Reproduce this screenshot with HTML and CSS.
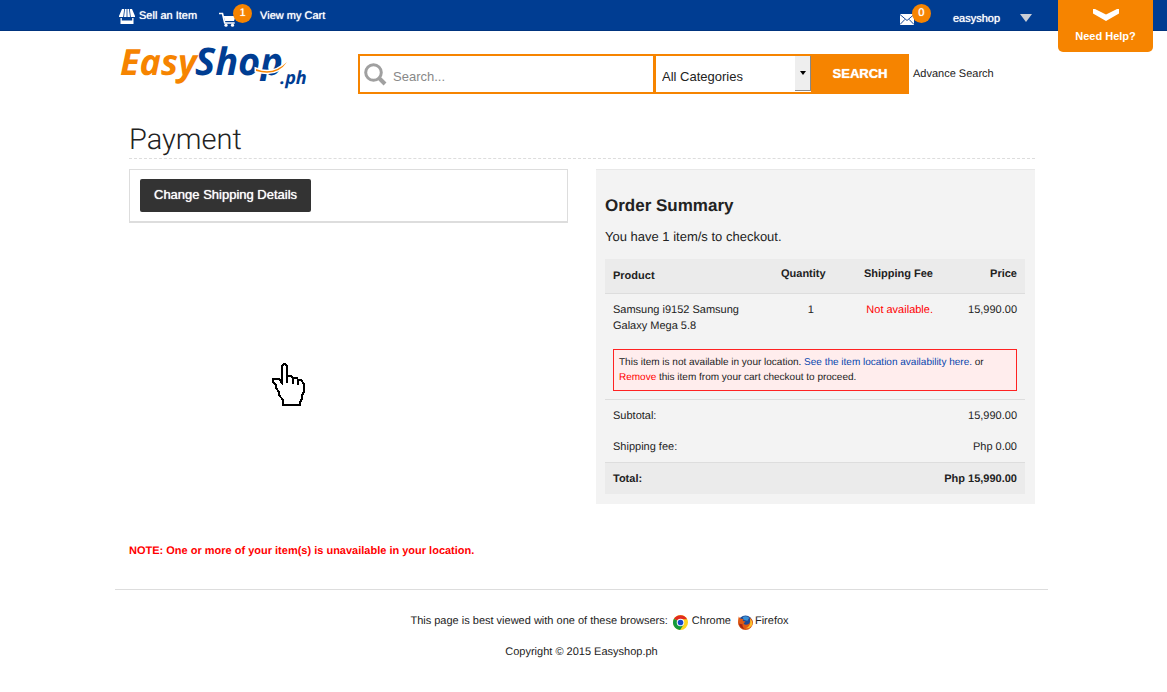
FILE: index.html
```html
<!DOCTYPE html>
<html lang="en">
<head>
<meta charset="utf-8">
<title>Payment | EasyShop.ph</title>
<link rel="stylesheet" href="styles.css">
</head>
<body>
<header>
  <nav class="topbar">
    <div class="topbar-group">
      <a class="toplink" href="#">
        <svg width="16" height="15" viewBox="0 0 16 15" fill="#fff"><path d="M3 0h2.200L4.200 8H0V7zM6 0h1.600v8H5zM8.400 0H10l1 8H8.400zM10.800 0H13l3 7v1h-4.200zM1.500 9h1.300v2.500h10.400V9h1.300v6h-13z"/></svg>
        Sell an Item</a>
      <a class="toplink cart" href="#">
        <svg width="17" height="15" viewBox="0 0 17 15"><path d="M0 1.500h3.500l2.200 9.500h10" fill="none" stroke="#fff" stroke-width="1.600"/><path d="M4.500 4h12l-1.500 5H6z" fill="#fff"/><circle cx="7" cy="13.200" r="1.600" fill="#fff"/><circle cx="13.500" cy="13.200" r="1.600" fill="#fff"/></svg>
        <span class="badge">1</span>
        <span>View my Cart</span></a>
    </div>
    <div class="topbar-group account">
      <a class="toplink mail" href="#" aria-label="Messages">
        <svg width="14" height="11" viewBox="0 0 14 11"><path fill="#fff" d="M0 0h14v11H0z"/><path d="M0 .5l7 6 7-6M0 10.500l5-5.200M14 10.500L9 5.300" fill="none" stroke="#1b4b98"/></svg>
        <span class="badge">0</span></a>
      <button class="user" type="button">easyshop
        <svg width="12" height="8" viewBox="0 0 12 8"><path fill="#c9ced6" d="M0 0h12L6 8z"/></svg></button>
    </div>
    <button class="help" type="button">
      <svg width="26" height="12" viewBox="0 0 26 12"><path fill="#fff" d="M0 0h2l11 5.500L24 0h2v4.500L13 12 0 4.500z"/></svg>
      Need Help?</button>
  </nav>
  <div class="masthead">
    <a class="logo" href="#" aria-label="EasyShop.ph">
      <svg width="190" height="63" viewBox="0 0 190 63">
        <text x="0" y="44" class="logo-easy">Easy</text>
        <text x="75" y="44" class="logo-shop">Shop</text>
        <path d="M130 50h24v12h-24z" fill="#fff"/>
        <path d="M136 38q17 7 31-7-10 15-31 9z" fill="#f68400" stroke="#fff" stroke-width="3" paint-order="stroke"/>
        <text x="160" y="53" class="logo-ph">.ph</text>
      </svg>
    </a>
    <form class="search">
      <label class="search-box">
        <svg width="23" height="23" viewBox="0 0 23 23" fill="none" stroke="#a0a0a0"><circle cx="9.500" cy="9.500" r="7.800" stroke-width="3"/><path d="M15 15l6 6" stroke-width="4"/></svg>
        <input type="text" placeholder="Search..." aria-label="Search">
      </label>
      <div class="category">
        <select aria-label="Category"><option>All Categories</option></select>
        <span class="category-arrow"><svg width="6" height="4" viewBox="0 0 6 4"><path d="M0 0h6L3 4z"/></svg></span>
      </div>
      <button class="search-button" type="submit">SEARCH</button>
      <a class="advanced" href="#">Advance Search</a>
    </form>
  </div>
</header>
<main>
  <h1>Payment</h1>
  <div class="columns">
    <section class="shipping"><button class="change" type="button">Change Shipping Details</button></section>
    <section class="summary">
      <h2>Order Summary</h2>
      <p class="count">You have 1 item/s to checkout.</p>
      <table>
        <colgroup><col class="c-product"><col class="c-qty"><col class="c-fee"><col class="c-price"></colgroup>
        <thead><tr><th class="product">Product</th><th>Quantity</th><th class="right">Shipping Fee</th><th class="right">Price</th></tr></thead>
        <tbody>
          <tr class="item"><td>Samsung i9152 Samsung Galaxy Mega 5.8</td><td class="center">1</td><td class="right red">Not available.</td><td class="right">15,990.00</td></tr>
          <tr class="notice"><td colspan="4"><div class="alert">This item is not available in your location. <a class="blue" href="#">See the item location availability here.</a> or <a class="red" href="#">Remove</a> this item from your cart checkout to proceed.</div></td></tr>
        </tbody>
        <tfoot>
          <tr class="subtotal"><td colspan="2">Subtotal:</td><td class="right" colspan="2">15,990.00</td></tr>
          <tr><td colspan="2">Shipping fee:</td><td class="right" colspan="2">Php 0.00</td></tr>
          <tr class="total"><td colspan="2">Total:</td><td class="right" colspan="2">Php 15,990.00</td></tr>
        </tfoot>
      </table>
    </section>
  </div>
  <p class="note">NOTE: One or more of your item(s) is unavailable in your location.</p>
</main>
<footer>
  <p class="browsers">This page is best viewed with one of these browsers:
    <a href="#"><svg width="15" height="15" viewBox="0 0 16 16"><circle cx="8" cy="8" r="8" fill="#ffd51d"/><path d="M8 8L1 4.100a8 8 0 0 1 14 .4H8z" fill="#e12b20"/><path d="M8 8L1 4.100A8 8 0 0 0 7.500 16l4-6z" fill="#149a3c"/><circle cx="8" cy="8" r="4" fill="#fff"/><circle cx="8" cy="8" r="3" fill="#1749c9"/></svg>
    <span>Chrome</span></a>
    <a class="firefox" href="#"><svg width="15" height="15" viewBox="0 0 16 16"><circle cx="8" cy="8" r="7.500" fill="#1f4a96"/><path d="M5 2q4-2 7 1l-2 3-4-1z" fill="#3a91d5"/><path d="M1 2l2 2 3 .5-1 2 3 .5-2 2q2 3 6 0 2-3 0-7 4 3 4 6a8 8 0 0 1-16 0q0-4 1-7z" fill="#e25a13"/><path d="M13 4q3 3 2 7-3 4-7 3 6-1 5-10z" fill="#ffc02b"/><path d="M1 9q1 5 6 6-3-3-2-5z" fill="#a92412"/></svg>
    <span>Firefox</span></a></p>
  <p class="copyright">Copyright © 2015 Easyshop.ph</p>
</footer>
<svg class="pointer" width="34" height="44" viewBox="0 0 34 44" shape-rendering="crispEdges"><path d="M10 20V3l2-2h1l2 2v10h4l2 2h4l1 2h3l3 4v8l-2 3v4l-2 3v3H11v-5l-4-5v-3l-3-4v-3l-3-3v-3h6l3 4zM15 13v7M21 15v6M26 17v5" fill="#fff" stroke="#000" stroke-width="2"/></svg>
</body>
</html>
```
FILE: styles.css
```css
* { box-sizing: border-box; }
body {
  margin: 0;
  position: relative;
  font: 11px/16px "Liberation Sans", Arial, sans-serif;
  text-rendering: geometricPrecision;
  color: #222;
  background: #fff;
}
a { color: inherit; text-decoration: none; }
button, input, select { font: inherit; border: 0; margin: 0; padding: 0; }
button { cursor: pointer; }
h1, h2, p { margin: 0; }
svg { flex: none; }

.topbar {
  display: flex;
  justify-content: space-between;
  position: relative;
  height: 31px;
  padding: 0 135px 0 119px;
  background: #003d92;
  border-bottom: 1px solid #00347f;
  color: #fff;
}
.topbar-group { display: flex; align-items: center; gap: 22px; padding-top: 2px; text-shadow: 0 0 1px #fff; }
.toplink { display: flex; align-items: center; gap: 4px; }
.cart, .mail { position: relative; }
.cart { gap: 24px; }
.cart svg, .mail svg { margin-top: 6px; }
.badge {
  position: absolute;
  left: 14px;
  top: -2px;
  width: 19px;
  border-radius: 10px;
  background: #f68400;
  line-height: 19px;
  text-align: center;
}
.mail .badge { left: 12px; top: -4px; }
.account { gap: 39px; }
.user { display: flex; align-items: center; gap: 20px; padding-top: 3px; background: none; color: #fff; text-shadow: inherit; }
.help {
  position: absolute;
  top: 0;
  right: 14px;
  display: flex;
  flex-direction: column;
  align-items: center;
  gap: 7px;
  width: 95px;
  padding: 9px 0 8px;
  border-radius: 0 0 5px 5px;
  background: #f68400;
  color: #fff;
  font-weight: bold;
}

.masthead { display: flex; padding: 0 178px 0 120px; }
.logo { width: 238px; }
.logo svg { display: block; }
.logo text { font-family: "Open Sans", "Noto Sans", sans-serif; font-style: italic; font-weight: 700; }
.logo-easy { font-size: 36px; fill: #f68400; }
.logo-shop { font-size: 38px; fill: #003d92; }
.logo .logo-ph { font-size: 18px; fill: #003d92; }
.search { display: flex; flex: 1; height: 40px; margin-top: 23px; font-size: 13px; }
.search-box {
  display: flex;
  align-items: center;
  gap: 6px;
  flex: 1;
  padding-left: 4px;
  border: 2px solid #f68400;
}
.search-box input { flex: 1; min-width: 0; height: 34px; padding-top: 4px; outline: 0; }
.search-box input::placeholder { color: #888; opacity: 1; }
.category { position: relative; width: 156px; border: solid #f68400; border-width: 2px 0 2px 1px; }
.category select { width: 100%; height: 36px; padding: 5px 20px 0 6px; appearance: none; background: #fff; color: #222; }
.category-arrow {
  position: absolute;
  top: 0;
  right: 0;
  display: flex;
  align-items: center;
  justify-content: center;
  width: 16px;
  height: 35px;
  border: solid #888;
  border-width: 0 1px 1px 0;
  background: #eee;
  pointer-events: none;
}
.search-button { width: 98px; background: #f68400; color: #fff; font-weight: bold; text-shadow: 0 0 1px #fff; }
.advanced { width: 80px; padding: 12px 0 0 4px; font-size: 11px; white-space: nowrap; }

main { padding: 0 132px 0 129px; }
h1 {
  padding: 28px 0 0;
  border-bottom: 1px dashed #ddd;
  font-family: Roboto, sans-serif;
  font-size: 29px;
  font-weight: 300;
  line-height: 36px;
}
.columns { display: grid; grid-template-columns: 1fr 1fr; gap: 28px; align-items: start; margin-top: 10px; }
.shipping { padding: 9px 10px; border: 1px solid #ddd; border-bottom-width: 2px; }
.change {
  display: block;
  padding: 0 14px 2px;
  border-radius: 2px;
  background: #333;
  color: #fff;
  font-size: 13px;
  line-height: 31px;
  text-shadow: 0 0 1px #fff;
}
.summary { padding: 26px 10px 10px 9px; border-top: 1px solid #e8e8e8; background: #f3f3f3; }
h2 { font-size: 17px; line-height: 20px; }
.count { padding: 11px 0 12px; font-size: 13px; line-height: 20px; }
table { width: 100%; border-collapse: collapse; table-layout: fixed; }
.c-product { width: 40%; }
.c-qty { width: 18%; }
.c-fee { width: 22%; }
.c-price { width: 20%; }
th, td { padding: 8px 8px 7px; text-align: left; vertical-align: top; }
th { padding: 7px 8px 11px; }
th.product { padding: 9px 8px; }
thead tr, .total { background: #ebebeb; }
thead tr { border-bottom: 1px solid #ddd; }
th.right, td.right { padding-left: 0; text-align: right; }
td.center { text-align: center; }
.red { color: #f00; }
.blue { color: #0645ad; }
.notice td { padding-bottom: 8px; }
.alert { padding: 5px; border: 1px solid #f22; background: #ffeded; font-size: 10px; line-height: 15px; }
.subtotal, .total { border-top: 1px solid #ddd; }
.total { font-weight: bold; }
.note { padding: 39px 0 30px; color: #f00; font-weight: bold; }

footer { margin: 0 119px 0 115px; border-top: 1px solid #ddd; text-align: center; }
.browsers { display: flex; justify-content: center; gap: 5px; padding: 23px 0 14px 36px; }
.browsers a { display: flex; gap: 4px; }
.browsers svg { margin-top: 2px; }
.browsers .firefox { gap: 2px; margin-left: 2px; }
.pointer { position: absolute; left: 272px; top: 363px; }
```
